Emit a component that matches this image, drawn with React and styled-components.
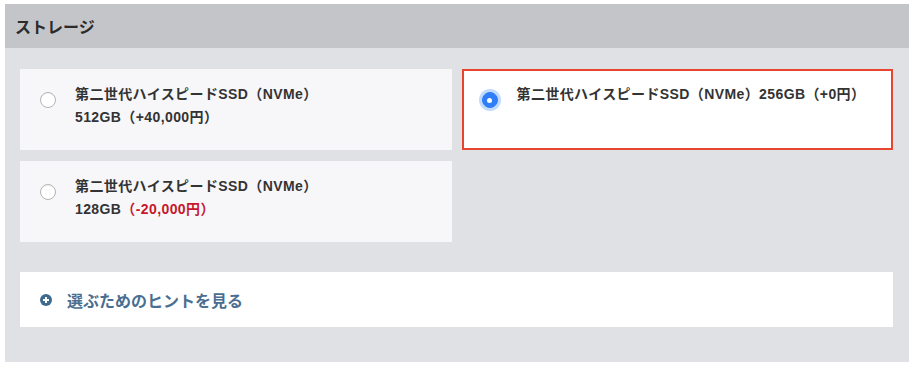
import React, { useState } from 'react';
import styled, { createGlobalStyle } from 'styled-components';

const GlobalStyle = createGlobalStyle`
	html, body {
		margin: 0;
		padding: 0;
		background: #fff;
		font-family: 'Liberation Sans', 'Noto Sans CJK JP', sans-serif;
		color: #333;
	}
`;

const Panel = styled.section`
	width: 904px;
	margin: 4px 0 0 5px;
	background: #dfe1e5;
`;

const Header = styled.h2`
	margin: 0;
	height: 44px;
	display: flex;
	align-items: center;
	padding-left: 10px;
	background: #c4c5c9;
	font-size: 16px;
	font-weight: 700;
	color: #2b2b2b;
	box-sizing: border-box;
`;

const Body = styled.div`
	padding: 21px 16px 35px 15px;
`;

const Options = styled.div`
	display: grid;
	grid-template-columns: 1fr 1fr;
	gap: 11px 10px;
`;

const Card = styled.label`
	display: flex;
	align-items: flex-start;
	gap: 19px;
	height: 81px;
	box-sizing: border-box;
	padding: 12px 18px;
	border: 2px solid ${p => (p.$selected ? '#e8452f' : 'transparent')};
	background: ${p => (p.$selected ? '#fff' : '#f7f7f9')};
	cursor: pointer;
`;

const Radio = styled.span`
	flex: none;
	width: 16px;
	height: 16px;
	margin-top: 9px;
	border-radius: 50%;
	box-sizing: border-box;
	display: flex;
	align-items: center;
	justify-content: center;
	background: ${p => (p.$checked ? '#2f7ef7' : '#fff')};
	border: 1px solid ${p => (p.$checked ? '#2f7ef7' : '#b4b4b4')};
	box-shadow: ${p =>
		p.$checked ? '0 0 0 3px rgba(80, 150, 250, 0.35)' : 'inset 0 1px 1px rgba(0,0,0,0.05)'};

	&::after {
		content: '';
		display: ${p => (p.$checked ? 'block' : 'none')};
		width: 5px;
		height: 5px;
		border-radius: 50%;
		background: #fff;
	}
`;

const Text = styled.div`
	font-size: 14px;
	font-weight: 700;
	line-height: 23px;
	letter-spacing: 0.4px;
	color: #333;
`;

const Price = styled.span`
	color: ${p => (p.$minus ? '#c8172c' : 'inherit')};
`;

const Hint = styled.button`
	margin-top: 30px;
	width: 100%;
	height: 55px;
	display: flex;
	align-items: center;
	gap: 15px;
	padding: 0 20px;
	border: none;
	background: #fff;
	font-family: inherit;
	font-size: 16px;
	font-weight: 700;
	color: #4a6e90;
	cursor: pointer;
	text-align: left;
`;

const PlusIcon = () => (
	<svg width="12" height="12" viewBox="0 0 12 12">
		<circle cx="6" cy="6" r="6" fill="#3f6a90" />
		<path d="M6 3v6M3 6h6" stroke="#fff" strokeWidth="2" />
	</svg>
);

const options = [
	{ id: '512', name: '第二世代ハイスピードSSD（NVMe）', size: '512GB', price: '（+40,000円）', wrap: true },
	{ id: '256', name: '第二世代ハイスピードSSD（NVMe）', size: '256GB', price: '（+0円）', wrap: false },
	{ id: '128', name: '第二世代ハイスピードSSD（NVMe）', size: '128GB', price: '（-20,000円）', wrap: true, minus: true },
];

const App = () => {
	const [selected, setSelected] = useState('256');

	return (
		<>
			<GlobalStyle />
			<Panel>
				<Header>ストレージ</Header>
				<Body>
					<Options>
						{options.map(o => (
							<Card key={o.id} $selected={selected === o.id} onClick={() => setSelected(o.id)}>
								<Radio $checked={selected === o.id} />
								<Text>
									{o.name}
									{o.wrap && <br />}
									{o.size}
									<Price $minus={o.minus}>{o.price}</Price>
								</Text>
							</Card>
						))}
					</Options>
					<Hint>
						<PlusIcon />
						選ぶためのヒントを見る
					</Hint>
				</Body>
			</Panel>
		</>
	);
};

export default App;
